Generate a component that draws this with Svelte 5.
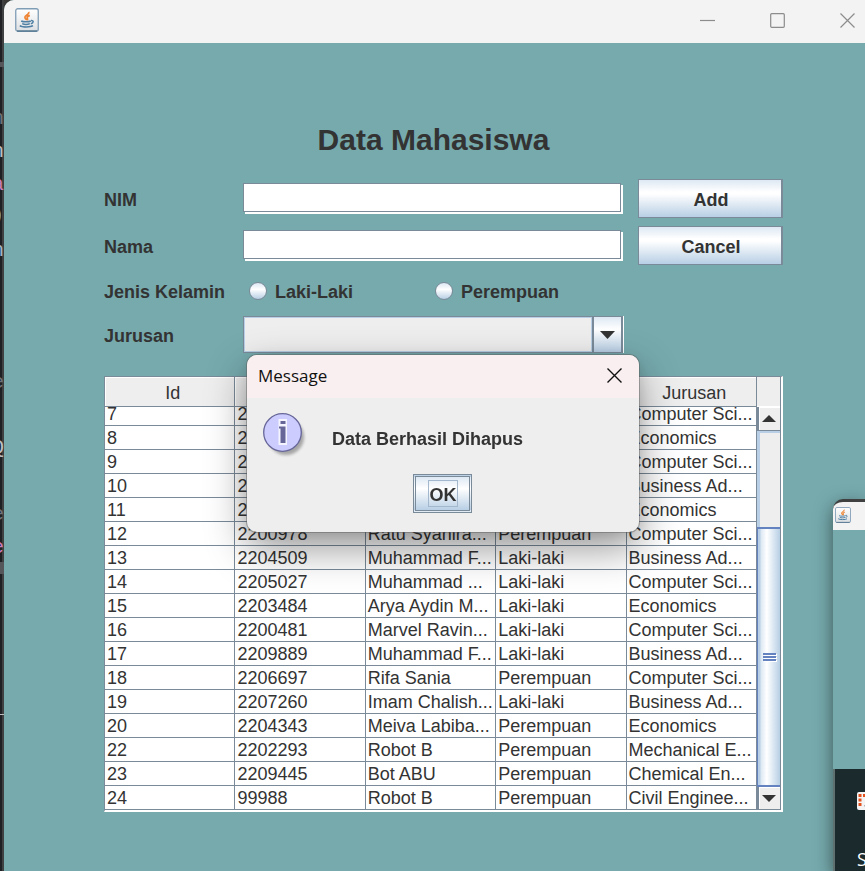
<script>
  import { onMount } from 'svelte';

  const columns = ['Id', 'NIM', 'Nama', 'Jenis Kelamin', 'Jurusan'];
  const rows = [
    ['7', '22', '', '', 'Computer Sci...'],
    ['8', '22', '', '', 'Economics'],
    ['9', '22', '', '', 'Computer Sci...'],
    ['10', '22', '', '', 'Business Ad...'],
    ['11', '22', '', '', 'Economics'],
    ['12', '2200978', 'Ratu Syahira...', 'Perempuan', 'Computer Sci...'],
    ['13', '2204509', 'Muhammad F...', 'Laki-laki', 'Business Ad...'],
    ['14', '2205027', 'Muhammad ...', 'Laki-laki', 'Computer Sci...'],
    ['15', '2203484', 'Arya Aydin M...', 'Laki-laki', 'Economics'],
    ['16', '2200481', 'Marvel Ravin...', 'Laki-laki', 'Computer Sci...'],
    ['17', '2209889', 'Muhammad F...', 'Laki-laki', 'Business Ad...'],
    ['18', '2206697', 'Rifa Sania', 'Perempuan', 'Computer Sci...'],
    ['19', '2207260', 'Imam Chalish...', 'Laki-laki', 'Business Ad...'],
    ['20', '2204343', 'Meiva Labiba...', 'Perempuan', 'Economics'],
    ['22', '2202293', 'Robot B', 'Perempuan', 'Mechanical E...'],
    ['23', '2209445', 'Bot ABU', 'Perempuan', 'Chemical En...'],
    ['24', '99988', 'Robot B', 'Perempuan', 'Civil Enginee...']
  ];

  // Ends of the editor's code lines that stick out behind the window
  const fragments = [
    { y: 106, t: 'n', c: '#6f737a' },
    { y: 139, t: 'n', c: '#bcbec4' },
    { y: 172, t: 'a', c: '#c77dbb' },
    { y: 203, t: ')', c: '#8fb4dc' },
    { y: 238, t: 'n', c: '#a3b4c8' },
    { y: 370, t: 'e', c: '#6f737a' },
    { y: 401, t: "'", c: '#6aab73' },
    { y: 435, t: 'Q', c: '#bcbec4' },
    { y: 502, t: 'e', c: '#6f737a' },
    { y: 535, t: 'e', c: '#c77dbb' },
    { y: 695, t: '_', c: '#bcbec4' }
  ];

  let scroller;
  onMount(() => {
    scroller.scrollTop = scroller.scrollHeight;
  });
</script>

{#snippet javaLogo()}
  <svg viewBox="0 0 24 24" aria-hidden="true">
    <defs>
      <linearGradient id="tile" x1="0" y1="0" x2="0" y2="1">
        <stop offset="0" stop-color="#ffffff" />
        <stop offset="1" stop-color="#dcdfe2" />
      </linearGradient>
    </defs>
    <rect x="0.75" y="0.75" width="22.5" height="22.5" rx="2" fill="url(#tile)" stroke="#7f9db5" stroke-width="1.3" />
    <path d="M2 23h20" stroke="#41647f" stroke-width="1" />
    <path d="M13.600 4c1.400 2.300-4.200 3.300-3.700 5.600.2 1 1.400 1.700 1.900 2.600M14.800 7.400c-2 .8-3 1.600-2.600 2.700.3.8.8 1.200.1 2.200" fill="none" stroke="#ee8434" stroke-width="1.700" />
    <path d="M6.200 13c1.800 1 7.800 1 9.600 0M7.200 15.600c2 .9 5.600.9 7.600 0M16 12.600c3.200-.5 2.700 2.500-.2 3.100M4.800 17.600c2.400 1.800 11 1.700 13.200.1" fill="none" stroke="#4f7fa3" stroke-width="1.500" />
  </svg>
{/snippet}

<div class="desktop">
  <div class="editor" aria-hidden="true">
    <i class="bar" style="top:62px;height:5px"></i>
    <i class="bar" style="top:562px;height:12px"></i>
    {#each fragments as f}
      <span style="top:{f.y}px;color:{f.c}">{f.t}</span>
    {/each}
  </div>

  <div class="window">
    <header class="titlebar">
      <span class="logo">{@render javaLogo()}</span>
      <div class="controls">
        <button aria-label="Minimize"><svg width="15" height="15"><path d="M0 7.500h15" /></svg></button>
        <button aria-label="Maximize"><svg width="15" height="15"><rect x="0.700" y="0.700" width="13.600" height="13.600" rx="1" /></svg></button>
        <button aria-label="Close"><svg width="15" height="15"><path d="M0.500 0.500l14 14M14.500 0.500l-14 14" /></svg></button>
      </div>
    </header>

    <main>
      <h1>Data Mahasiswa</h1>
      <div class="panel">
        <form onsubmit={(e) => e.preventDefault()}>
          <label for="nim">NIM</label>
          <input id="nim" class="text" type="text" />
          <button class="metal" type="submit">Add</button>

          <label for="nama">Nama</label>
          <input id="nama" class="text" type="text" />
          <button class="metal" type="button">Cancel</button>

          <span id="jk">Jenis Kelamin</span>
          <div class="radios" role="radiogroup" aria-labelledby="jk">
            <label><input type="radio" name="jk" value="L" /><span>Laki-Laki</span></label>
            <label><input type="radio" name="jk" value="P" /><span>Perempuan</span></label>
          </div>

          <label for="jurusan">Jurusan</label>
          <div class="combo">
            <select id="jurusan"><option value=""></option><option>Economics</option></select>
            <span class="arrow" aria-hidden="true"><svg width="15" height="8"><path d="M0 0h15L7.500 8z" fill="#333" /></svg></span>
          </div>
        </form>

        <div class="grid">
          <div class="scroller" bind:this={scroller}>
            <table>
              <thead>
                <tr>{#each columns as c}<th scope="col">{c}</th>{/each}</tr>
              </thead>
              <tbody>
                {#each rows as r}
                  <tr>{#each r as cell}<td>{cell}</td>{/each}</tr>
                {/each}
              </tbody>
            </table>
          </div>
          <div class="scrollbar">
            <div class="corner"></div>
            <button class="step" aria-label="Scroll up"><svg width="14" height="7"><path d="M0 7h14L7 0z" fill="#333" /></svg></button>
            <div class="track"></div>
            <div class="thumb"><i></i><i></i><i></i></div>
            <button class="step down" aria-label="Scroll down"><svg width="14" height="7"><path d="M0 0h14L7 7z" fill="#333" /></svg></button>
          </div>
        </div>

        <div class="dialog" role="dialog" aria-labelledby="dlg-title">
          <header>
            <span id="dlg-title">Message</span>
            <button aria-label="Close dialog"><svg width="15" height="15"><path d="M0.500 0.500l14 14M14.500 0.500l-14 14" /></svg></button>
          </header>
          <div class="message">
            <svg width="48" height="48" viewBox="0 0 48 48" aria-hidden="true">
              <defs>
                <filter id="soft" x="-20%" y="-20%" width="150%" height="150%"><feGaussianBlur stdDeviation="1.800" /></filter>
              </defs>
              <circle cx="23" cy="24" r="18" fill="#000" opacity="0.300" filter="url(#soft)" />
              <circle cx="19.500" cy="19.500" r="18.800" fill="#ccccff" stroke="#666699" stroke-width="1.300" />
              <path d="M15.500 6h8.500v26h-8.500z" fill="#f4f4ff" />
              <path d="M17.500 8h5v3h-5zM16 13.500h6.500V30h-5V15.500H16z" fill="#666699" />
            </svg>
            <p>Data Berhasil Dihapus</p>
          </div>
          <button class="ok"><span>OK</span></button>
        </div>
      </div>
    </main>
  </div>

  <aside class="preview" aria-hidden="true">
    <div class="mini-bar"><span>{@render javaLogo()}</span></div>
    <div class="mini-body"></div>
    <div class="taskbar">
      <svg width="18" height="18"><rect width="18" height="18" rx="2" fill="#f4f4f4" /><path d="M8 13a5 5 0 0 0 4 3h6" fill="none" stroke="#8c94a0" stroke-width="2" /><path d="M1.500 2h3v3h-3zM6 2h3v3H6zM1.500 6.500h3v3h-3zM1.500 11h3v3h-3z" fill="#e2501c" /></svg>
      <span>S</span>
    </div>
  </aside>
</div>

<style>
  :global(body) { background: #1f2023; }
  * { box-sizing: border-box; }
  button { font: inherit; color: inherit; padding: 0; margin: 0; border: 0; background: none; }
  svg { display: block; }

  .desktop {
    position: relative;
    display: flex;
    min-height: 100vh;
    overflow: hidden;
    background: #3b3937;
    font-family: "Liberation Sans", Arial, sans-serif;
    font-size: 18px;
    color: #333;
  }
  .editor {
    position: relative;
    width: 4px;
    overflow: hidden;
    background: linear-gradient(90deg, #1f2023 2px, #3f4042 2px);
    font-family: "Liberation Mono", monospace;
    font-size: 20px;
    line-height: 26px;
  }
  .editor span { position: absolute; right: 0; }
  .bar { position: absolute; width: 4px; background: #55565a; }

  .window {
    flex: 1;
    min-width: 0;
    border-top-left-radius: 10px;
    overflow: hidden;
    background: #76aaad;
  }
  .titlebar {
    display: flex;
    align-items: center;
    justify-content: space-between;
    height: 43px;
    padding: 0 10px 3px 11px;
    background: #f3f3f3;
  }
  .logo { width: 24px; }
  .controls { display: flex; gap: 55px; }
  .controls svg { fill: none; stroke: #8c8c8c; stroke-width: 1.2; }

  main { padding: 77px 82px 59px 100px; }
  h1 {
    margin: 0 0 19px -20px;
    font-size: 30px;
    line-height: 40px;
    text-align: center;
  }
  .panel { position: relative; }
  form {
    display: grid;
    grid-template-columns: 139px 1fr 145px;
    grid-template-rows: 39px 39px 35px 37px;
    row-gap: 8px;
    align-items: center;
    font-weight: bold;
  }
  form > label, form > span { padding-top: 3px; }
  .text {
    width: calc(100% - 17px);
    height: 29px;
    margin: 0 0 2px;
    padding: 0 4px;
    border: 1px solid #7a8a99;
    border-radius: 0;
    background: #fff;
    box-shadow: 2px 2px 0 #fff;
    font: inherit;
  }
  .metal {
    height: 39px;
    padding: 4px 0 0 2px;
    border: 1px solid #7a8a99;
    border-right-width: 2px;
    background: linear-gradient(#dde8f3, #fff 32%, #fff 38%, #b8cfe5);
    font-weight: bold;
  }
  .radios { display: flex; grid-column: 2 / 4; }
  .radios label { display: flex; align-items: center; width: 186px; padding-left: 6px; }
  .radios span { padding-top: 3px; }
  .radios input {
    appearance: none;
    width: 18px;
    height: 18px;
    margin: 0 8px 0 0;
    border: 1px solid #7a8a99;
    border-radius: 50%;
    background: linear-gradient(#dde8f3, #fff 40%, #b8cfe5);
  }
  .combo {
    display: flex;
    width: calc(100% - 15px);
    height: 37px;
    border: 1px solid #7a8a99;
    border-right-width: 2px;
    box-shadow: 1px 0 0 #fff;
  }
  .combo select {
    appearance: none;
    flex: 1;
    border: 1px solid #b8cfe5;
    border-radius: 0;
    background: #eee;
    font: inherit;
  }
  .arrow {
    display: grid;
    place-items: center;
    width: 29px;
    border-left: 2px solid #7a8a99;
    background: linear-gradient(#dde8f3, #fff 35%, #b8cfe5);
  }

  .grid {
    display: flex;
    height: 436px;
    margin-top: 23px;
    border: solid;
    border-width: 1px 2px 2px 1px;
    border-color: #7a8a99 #fff #fff #7a8a99;
  }
  .scroller { flex: 1; height: 433px; overflow: hidden; background: #fff; }
  table { width: 100%; border-spacing: 0; table-layout: fixed; }
  th {
    position: sticky;
    top: 0;
    height: 30px;
    padding: 4px 0 0 6px;
    border-right: 1px solid #7a8a99;
    border-bottom: 1px solid #7a8a99;
    background: #eee;
    box-shadow: inset 1px 1px 0 #fff;
    font-weight: normal;
  }
  td {
    height: 24px;
    padding: 2px 0 0 2px;
    border-right: 1px solid #7a8a99;
    border-bottom: 1px solid #7a8a99;
    line-height: 21px;
    white-space: nowrap;
    overflow: hidden;
  }
  .scrollbar {
    display: flex;
    flex-direction: column;
    width: 24px;
    height: 433px;
    border-right: 1px solid #7a8a99;
    border-bottom: 1px solid #7a8a99;
    background: #eee;
  }
  .corner { height: 30px; border-bottom: 1px solid #fff; }
  .step {
    display: grid;
    place-items: center;
    height: 24px;
    border-left: 2px solid #7a8a99;
    border-bottom: 1px solid #7a8a99;
    background: #eee;
    box-shadow: inset 1px 1px 0 #fff;
  }
  .step svg { margin-right: 2px; }
  .down { height: 22px; border-bottom: 0; }
  .track {
    height: 96px;
    border: solid #b8cfe5;
    border-width: 2px 0 0 2px;
    box-shadow: inset 1px 0 0 #b8cfe5;
  }
  .thumb {
    display: flex;
    flex: 1;
    flex-direction: column;
    align-items: center;
    justify-content: center;
    gap: 1px;
    border: solid #6382bf;
    border-width: 2px 0 2px 1px;
    background: linear-gradient(90deg, #b8cfe5 2px, #dde8f3 3px, #fff 40%, #b8cfe5);
  }
  .thumb i { width: 13px; height: 2px; background: #6382bf; box-shadow: 1px 1px 0 #fff; }

  .dialog {
    position: absolute;
    top: 176px;
    left: 143px;
    width: 392px;
    height: 177px;
    border-radius: 10px;
    background: #eee;
    box-shadow: 0 0 0 1px rgba(90, 90, 90, 0.45), 0 16px 40px rgba(0, 0, 0, 0.42), 0 2px 14px rgba(0, 0, 0, 0.1);
  }
  .dialog header {
    display: flex;
    align-items: center;
    justify-content: space-between;
    height: 43px;
    padding: 0 17px 2px 11px;
    border-radius: 10px 10px 0 0;
    background: #f9eff0;
    color: #111;
    font-family: "Open Sans", "Noto Sans", sans-serif;
    font-size: 17px;
  }
  .dialog header svg { stroke: #111; stroke-width: 1.4; }
  .message {
    display: flex;
    gap: 21px;
    padding: 15px 16px 0;
    font-weight: bold;
  }
  .message p { margin: 0; line-height: 52px; }
  .ok {
    display: grid;
    place-items: center;
    width: 59px;
    height: 39px;
    margin: 9px auto 0 166px;
    border: 3px double #7a8a99;
    background: linear-gradient(#dde8f3, #fff 35%, #b8cfe5);
    font-weight: bold;
  }
  .ok span { padding: 4px 0 0 1px; border: 1px solid #a3b8cc; line-height: 21px; }

  .preview {
    position: absolute;
    top: 499px;
    right: 0;
    bottom: 0;
    display: flex;
    flex-direction: column;
    width: 32px;
    border-top: 3px solid #3f4040;
    border-top-left-radius: 10px;
    background: #f3f3f3;
    box-shadow: 0 6px 18px rgba(0, 0, 0, 0.5);
  }
  .mini-bar { height: 28px; padding: 5px 0 0 2px; }
  .mini-bar span { display: block; width: 16px; }
  .mini-body { height: 239px; background: #76aaad; }
  .taskbar {
    flex: 1;
    padding: 23px 0 0 22px;
    border-left: 2px solid #5f7071;
    background: #1a2a2d;
    color: #fff;
    font-family: "Open Sans", "Noto Sans", sans-serif;
    line-height: 24px;
    overflow: hidden;
  }
  .taskbar span { display: block; margin-top: 37px; }
</style>
